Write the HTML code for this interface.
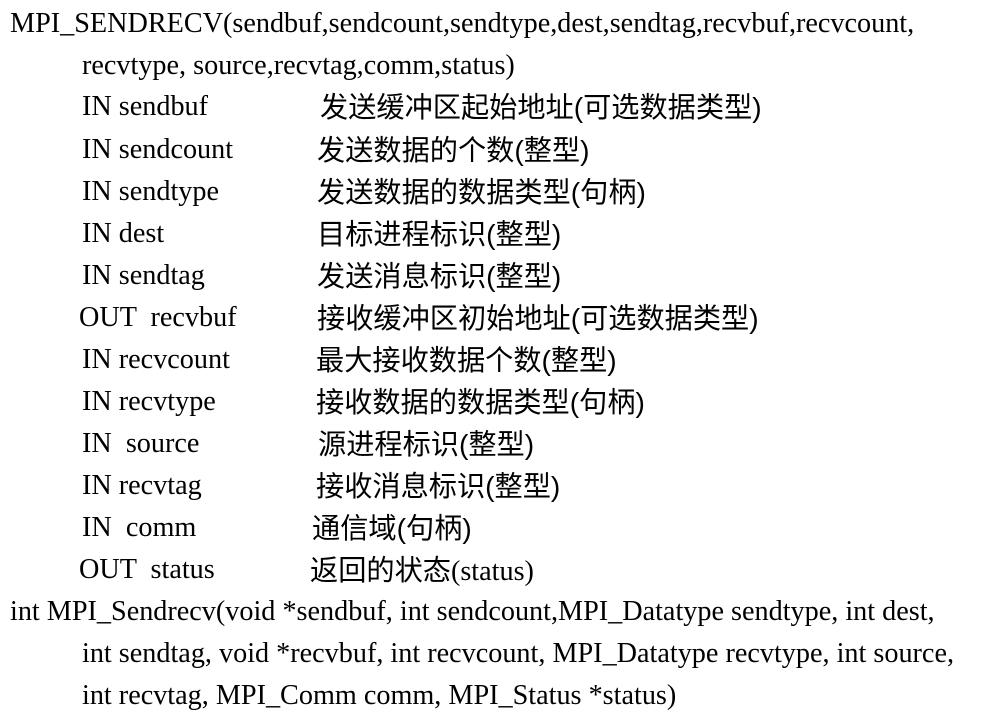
<!DOCTYPE html>
<html><head><meta charset="utf-8"><style>
body{margin:0;background:#fff;width:998px;height:716px;overflow:hidden;position:relative;color:#000}
div{position:absolute;margin-top:2px;white-space:pre;line-height:42px;font-family:"Liberation Serif",serif;font-size:28.2px}
.c{font-family:"Liberation Sans","Noto Sans CJK SC",sans-serif;font-size:28.2px}
.c .s{font-family:"Liberation Serif",serif;font-size:28.2px}
</style></head><body>
<div style="left:10px;top:1px">MPI_SENDRECV(sendbuf,sendcount,sendtype,dest,sendtag,recvbuf,recvcount,</div>
<div style="left:82px;top:43px">recvtype, source,recvtag,comm,status)</div>
<div style="left:82px;top:84px">IN sendbuf</div><div class="c" style="left:320px;top:84px">发送缓冲区起始地址(可选数据类型)</div>
<div style="left:82px;top:127px">IN sendcount</div><div class="c" style="left:317px;top:127px">发送数据的个数(整型)</div>
<div style="left:82px;top:169px">IN sendtype</div><div class="c" style="left:317px;top:169px">发送数据的数据类型(句柄)</div>
<div style="left:82px;top:211px">IN dest</div><div class="c" style="left:317px;top:211px">目标进程标识(整型)</div>
<div style="left:82px;top:253px">IN sendtag</div><div class="c" style="left:317px;top:253px">发送消息标识(整型)</div>
<div style="left:79px;top:295px">OUT  recvbuf</div><div class="c" style="left:317px;top:295px">接收缓冲区初始地址(可选数据类型)</div>
<div style="left:82px;top:337px">IN recvcount</div><div class="c" style="left:316px;top:337px">最大接收数据个数(整型)</div>
<div style="left:82px;top:379px">IN recvtype</div><div class="c" style="left:316px;top:379px">接收数据的数据类型(句柄)</div>
<div style="left:82px;top:421px">IN  source</div><div class="c" style="left:318px;top:421px">源进程标识(整型)</div>
<div style="left:82px;top:463px">IN recvtag</div><div class="c" style="left:316px;top:463px">接收消息标识(整型)</div>
<div style="left:82px;top:505px">IN  comm</div><div class="c" style="left:312px;top:505px">通信域(句柄)</div>
<div style="left:79px;top:547px">OUT  status</div><div class="c" style="left:310px;top:547px">返回的状态<span class="s">(status)</span></div>
<div style="left:10px;top:589px">int MPI_Sendrecv(void *sendbuf, int sendcount,MPI_Datatype sendtype, int dest,</div>
<div style="left:82px;top:631px">int sendtag, void *recvbuf, int recvcount, MPI_Datatype recvtype, int source,</div>
<div style="left:82px;top:673px">int recvtag, MPI_Comm comm, MPI_Status *status)</div>
</body></html>
